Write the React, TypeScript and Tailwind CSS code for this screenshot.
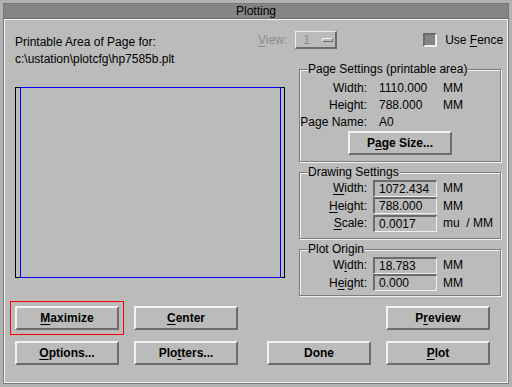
import React from "react";

// underline the mnemonic letter
function U({ children }: { children: React.ReactNode }) {
  return <span className="underline underline-offset-[2px] decoration-1">{children}</span>;
}

function Btn({ children }: { children: React.ReactNode }) {
  return (
    <button className="h-[24px] w-[104px] bg-[#bbbbbb] border-t-2 border-l-2 border-t-[#f2f2f2] border-l-[#f2f2f2] border-b-2 border-r-2 border-b-[#6b6b6b] border-r-[#6b6b6b] text-[12px] font-bold text-black">
      {children}
    </button>
  );
}

function Field({ value }: { value: string }) {
  return (
    <div className="h-[17px] w-[64px] border-t-2 border-l-2 border-t-[#6b6b6b] border-l-[#6b6b6b] border-b border-r border-b-[#efefef] border-r-[#efefef] pl-[4px] text-[12px] leading-[14px]">
      {value}
    </div>
  );
}

function Group({ title, children, className }: { title: string; children: React.ReactNode; className?: string }) {
  return (
    <div
      className={`relative border border-[#7d7d7d] shadow-[inset_1px_1px_0_#f2f2f2,1px_1px_0_#f2f2f2] ${className ?? ""}`}
    >
      <span className="absolute left-[8px] top-[-9px] bg-[#bbbbbb] pr-[1px] text-[12px] leading-[16px]">{title}</span>
      {children}
    </div>
  );
}

function Row({ label, children, tall }: { label: React.ReactNode; children: React.ReactNode; tall?: boolean }) {
  return (
    <div className={`flex items-center ${tall ? "h-[18px]" : "h-[17px]"}`}>
      <span className="w-[67px] text-right">{label}</span>
      <div className="ml-[6px] flex items-center">{children}</div>
    </div>
  );
}

export default function App() {
  return (
    <div className="h-[387px] w-[512px] bg-[#b2b2b2] p-[3px] font-['Liberation_Sans',Arial,sans-serif] text-[12px] text-black">
      <div className="flex h-full flex-col border border-[#7a7a7a]">
        {/* title bar */}
        <div className="flex h-[15px] items-center justify-center border-b border-[#6f6f6f] bg-[#858585] text-[12px] leading-none">
          Plotting
        </div>

        {/* body */}
        <div className="flex flex-1 flex-col border-l border-t border-l-[#f2f2f2] border-t-[#f2f2f2] border-b border-r border-b-[#f2f2f2] border-r-[#f2f2f2] bg-[#bbbbbb] pl-[10px] pr-[6px] pt-[1px]">
          <div className="flex">
            {/* left column */}
            <div className="w-[270px] shrink-0">
              <div className="mt-[13px] leading-[17px]">Printable Area of Page for:</div>
              <div className="leading-[17px]">c:\ustation\plotcfg\hp7585b.plt</div>
              <div className="relative mt-[19px] h-[191px] w-[270px] border border-black">
                <div className="absolute bottom-[-1px] left-[4px] right-[3px] top-[-1px] border border-[#0000ff]" />
              </div>
            </div>

            {/* right column */}
            <div className="ml-[14px] w-[202px] shrink-0">
              <div className="mt-[10px] flex h-[18px] items-center whitespace-nowrap">
                <span className="ml-[-41px] w-[30px] text-[#8c8c8c]">
                  <U>V</U>iew:
                </span>
                <div className="ml-[8px] flex h-[18px] w-[42px] shrink-0 items-center border-l border-t border-l-[#efefef] border-t-[#efefef] border-b-2 border-r-2 border-b-[#6b6b6b] border-r-[#6b6b6b] pl-[7px] text-[#8c8c8c]">
                  <span className="w-[19px]">1</span>
                  <span className="h-[4px] w-[11px] border-l border-t border-l-[#efefef] border-t-[#efefef] border-b border-r border-b-[#6b6b6b] border-r-[#6b6b6b]" />
                </div>
                <div className="ml-[86px] h-[14px] w-[14px] shrink-0 border-l-2 border-t-2 border-l-[#6b6b6b] border-t-[#6b6b6b] border-b-2 border-r-2 border-b-[#efefef] border-r-[#efefef] bg-[#858585]" />
                <span className="ml-[8px]">
                  Use <U>F</U>ence
                </span>
              </div>

              <Group title="Page Settings (printable area)" className="mt-[20px] pb-[6px] pt-[9px]">
                <div className="flex h-[17px] items-center">
                  <span className="w-[67px] text-right">Width:</span>
                  <span className="ml-[12px] w-[64px]">1110.000</span>
                  <span>MM</span>
                </div>
                <div className="flex h-[17px] items-center">
                  <span className="w-[67px] text-right">Height:</span>
                  <span className="ml-[12px] w-[64px]">788.000</span>
                  <span>MM</span>
                </div>
                <div className="flex h-[17px] items-center">
                  <span className="w-[67px] text-right">Page Name:</span>
                  <span className="ml-[12px]">A0</span>
                </div>
                <div className="mt-[1px] flex justify-center">
                  <Btn>
                    P<U>a</U>ge Size...
                  </Btn>
                </div>
              </Group>

              <Group title="Drawing Settings" className="mt-[10px] pb-[6px] pt-[6px]">
                <Row tall label={<><U>W</U>idth:</>}>
                  <Field value="1072.434" />
                  <span className="ml-[6px]">MM</span>
                </Row>
                <Row label={<><U>H</U>eight:</>}>
                  <Field value="788.000" />
                  <span className="ml-[6px]">MM</span>
                </Row>
                <Row tall label={<><U>S</U>cale:</>}>
                  <Field value="0.0017" />
                  <span className="ml-[6px] whitespace-nowrap">mu&nbsp;&nbsp;/&nbsp;MM</span>
                </Row>
              </Group>

              <Group title="Plot Origin" className="mt-[10px] pb-[4px] pt-[6px]">
                <Row tall label={<>W<U>i</U>dth:</>}>
                  <Field value="18.783" />
                  <span className="ml-[6px]">MM</span>
                </Row>
                <Row label={<>H<U>e</U>ight:</>}>
                  <Field value="0.000" />
                  <span className="ml-[6px]">MM</span>
                </Row>
              </Group>
            </div>
          </div>

          {/* buttons */}
          <div className="mt-[10px] flex">
            <div className="relative">
              <Btn>
                <U>M</U>aximize
              </Btn>
              {/* keyboard focus ring */}
              <span className="pointer-events-none absolute inset-[-5px] border border-[#ff0000]" />
            </div>
            <div className="ml-[15px]">
              <Btn>
                <U>C</U>enter
              </Btn>
            </div>
            <div className="ml-[148px]">
              <Btn>
                P<U>r</U>eview
              </Btn>
            </div>
          </div>
          <div className="mt-[11px] flex">
            <Btn>
              <U>O</U>ptions...
            </Btn>
            <div className="ml-[15px]">
              <Btn>
                Plo<U>t</U>ters...
              </Btn>
            </div>
            <div className="ml-[29px]">
              <Btn>Done</Btn>
            </div>
            <div className="ml-[15px]">
              <Btn>
                <U>P</U>lot
              </Btn>
            </div>
          </div>
        </div>
      </div>
    </div>
  );
}
